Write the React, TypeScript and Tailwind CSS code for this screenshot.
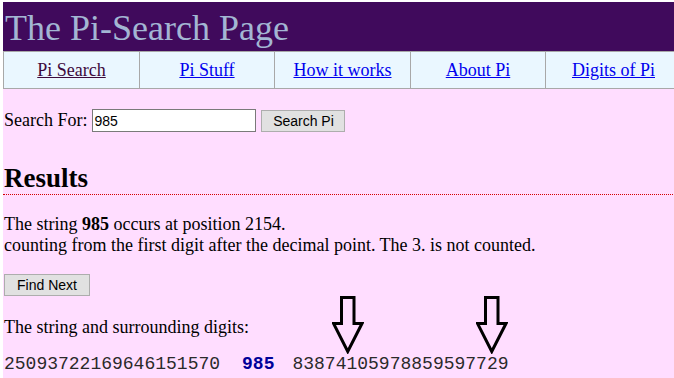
import React from "react";

const serif = { fontFamily: '"Liberation Serif", "Times New Roman", serif' };
const sans = { fontFamily: '"Liberation Sans", Arial, sans-serif' };
const mono = { fontFamily: '"Liberation Mono", "Courier New", monospace' };

const navItems = [
  { label: "Pi Search", w: "w-[136px]", current: true },
  { label: "Pi Stuff", w: "w-[135px]" },
  { label: "How it works", w: "w-[136px]" },
  { label: "About Pi", w: "w-[135px]" },
  { label: "Digits of Pi", w: "w-[136px]" },
];

function DownArrow() {
  return (
    <svg width="32" height="58" viewBox="0 0 32 58" fill="none">
      <polygon
        points="9.5,1.5 22,1.5 22,27.5 30,27.5 15.75,55.5 1.5,27.5 9.5,27.5"
        stroke="#000"
        strokeWidth={3}
        strokeLinejoin="miter"
        fill="none"
      />
    </svg>
  );
}

export default function App() {
  return (
    <div className="min-h-screen w-full overflow-hidden bg-white pt-[2px] pl-[3px]" style={serif}>
      <div className="w-[700px] min-h-[376px] bg-[#ffddff] text-black text-[18px]">
        {/* Title bar */}
        <div className="h-[49px] bg-[#400a5c] pl-[2px] pt-[6px]">
          <h1 className="text-[36px] leading-[41px] font-normal text-[#a3b6d3]">The Pi-Search Page</h1>
        </div>

        {/* Nav */}
        <div className="flex h-[38px] border-y border-l border-[#a8a8a8] bg-[#eaf7ff]">
          {navItems.map((item) => (
            <div
              key={item.label}
              className={`${item.w} shrink-0 flex items-center justify-center border-r border-[#a8a8a8]`}
            >
              <a
                href="#"
                className={`underline leading-[20px] ${item.current ? "text-[#3d0a3d]" : "text-[#0000ee]"}`}
              >
                {item.label}
              </a>
            </div>
          ))}
        </div>

        {/* Search form */}
        <div className="flex items-center mt-[18px] pl-[1px]">
          <span>Search For:</span>
          <input
            type="text"
            defaultValue="985"
            className="ml-[5px] w-[164px] h-[23px] border border-[#7a7a7a] bg-white px-[1px] text-[14px] outline-none"
            style={sans}
          />
          <button
            className="ml-[5px] w-[84px] h-[22px] border border-[#adadad] bg-[#e1e1e1] text-[14px] leading-[20px]"
            style={sans}
          >
            Search Pi
          </button>
        </div>

        {/* Results */}
        <h2 className="mt-[29px] text-[27px] leading-[31px] font-bold border-b border-dotted border-[#d40000] pl-[1px]">
          Results
        </h2>

        <p className="mt-[19px] leading-[21px] pl-[1px]">
          The string <b>985</b> occurs at position 2154.
          <br />
          counting from the first digit after the decimal point. The 3. is not counted.
        </p>

        <button
          className="mt-[18px] ml-[1px] w-[86px] h-[22px] border border-[#adadad] bg-[#e1e1e1] text-[14px] leading-[20px]"
          style={sans}
        >
          Find Next
        </button>

        <div className="relative">
          <p className="mt-[19px] leading-[21px] pl-[1px]">The string and surrounding digits:</p>

          <div className="absolute left-[329px] top-[-21px]">
            <DownArrow />
          </div>
          <div className="absolute left-[473px] top-[-21px]">
            <DownArrow />
          </div>

          <div className="mt-[16px] pl-[1px] text-[18px] leading-[21px] whitespace-pre text-[#2a2a2a]" style={mono}>
            <span>25093722169646151570</span>
            <span className="ml-[22px] font-bold text-[#000099]">985</span>
            <span className="ml-[18px]">83874105978859597729</span>
          </div>
        </div>
      </div>
    </div>
  );
}
